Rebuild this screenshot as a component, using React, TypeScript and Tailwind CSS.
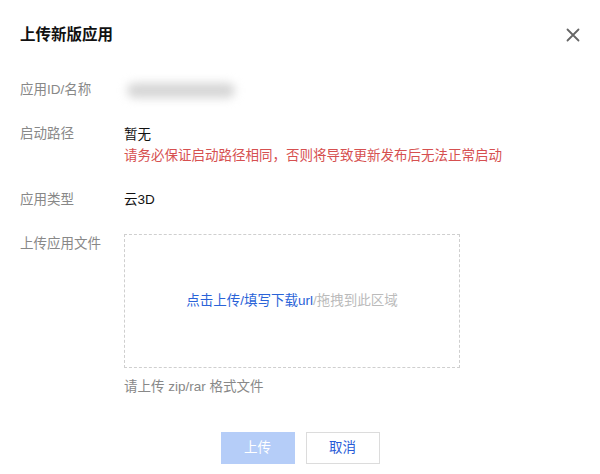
const font = { fontFamily: '"Liberation Sans", "Noto Sans CJK SC", sans-serif' };

function FormRow({ label, children }: { label: string; children: React.ReactNode }) {
  return (
    <div className="flex">
      <div className="w-[104px] shrink-0 text-[13.5px] leading-[20px] text-[#888]">{label}</div>
      <div className="flex-1">{children}</div>
    </div>
  );
}

export default function App() {
  return (
    <div className="w-[600px] h-[474px] bg-white overflow-hidden" style={font}>
      <div className="pl-[20px] pr-[20px] pt-[24px]">
        <div className="flex items-center justify-between">
          <h2 className="text-[15.5px] leading-[22px] font-bold text-[#111]">上传新版应用</h2>
          <button className="w-[14px] h-[14px] text-[#666]" aria-label="close">
            <svg viewBox="0 0 14 14" className="w-[14px] h-[14px]">
              <path d="M1.5 1.5 L12.5 12.5 M12.5 1.5 L1.5 12.5" stroke="currentColor" strokeWidth="1.8" strokeLinecap="round" />
            </svg>
          </button>
        </div>

        <div className="mt-[34px] flex flex-col gap-[24px]">
          <FormRow label="应用ID/名称">
            <div className="h-[20px] flex items-center">
              <div className="w-[108px] h-[15px] ml-[3px] rounded-full bg-[#d6d6d6] blur-[5px]" />
            </div>
          </FormRow>

          <FormRow label="启动路径">
            <div className="text-[13.5px] leading-[21px] text-[#111]">暂无</div>
            <div className="text-[13.5px] leading-[21px] text-[#d65050]">
              请务必保证启动路径相同，否则将导致更新发布后无法正常启动
            </div>
          </FormRow>

          <FormRow label="应用类型">
            <div className="text-[13.5px] leading-[20px] text-[#111]">云3D</div>
          </FormRow>

          <FormRow label="上传应用文件">
            <div className="w-[336px] h-[134px] border border-dashed border-[#cfcfcf] flex items-center justify-center text-[13.5px]">
              <span className="text-[#2a63d8]">点击上传/填写下载url</span>
              <span className="text-[#bbb]">/拖拽到此区域</span>
            </div>
            <div className="mt-[9px] text-[13.5px] leading-[20px] text-[#888]">请上传 zip/rar 格式文件</div>
          </FormRow>
        </div>

        <div className="mt-[35px] flex justify-center gap-[11px]">
          <button className="w-[74px] h-[32px] bg-[#b5cdf8] text-white text-[13.5px]" disabled>
            上传
          </button>
          <button className="w-[74px] h-[32px] border border-[#dcdcdc] bg-white text-[#2a5bd7] text-[13.5px]">
            取消
          </button>
        </div>
      </div>
    </div>
  );
}
